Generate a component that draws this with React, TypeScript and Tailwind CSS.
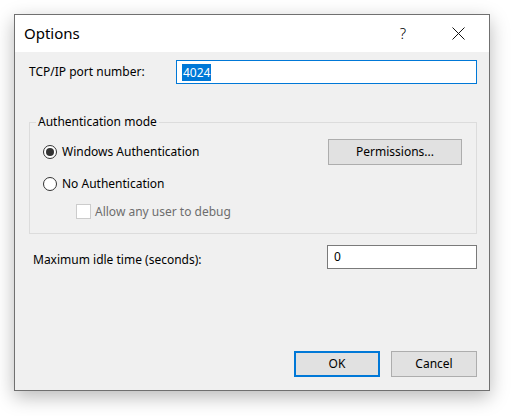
import React from 'react';

const font = { fontFamily: '"Noto Sans", "Liberation Sans", sans-serif' };

const Radio: React.FC<{ checked?: boolean }> = ({ checked }) => (
  <span className="w-[14px] h-[14px] rounded-full border border-[#333333] bg-white flex items-center justify-center shrink-0">
    {checked && <span className="w-[8px] h-[8px] rounded-full bg-[#333333]" />}
  </span>
);

const OptionsDialog: React.FC = () => {
  return (
    <div className="w-[512px] h-[416px] bg-white pt-[14px] pl-[14px] text-[12px] text-black" style={font}>
      <div className="w-[476px] h-[377px] border border-[#707070] bg-[#f0f0f0] flex flex-col shadow-[0_6px_18px_rgba(0,0,0,0.28)]">
        {/* title bar */}
        <div className="h-[37px] bg-white flex items-center shrink-0">
          <span className="pl-[9px] text-[15px] text-black">Options</span>
          <span className="ml-auto text-[15px] font-light text-black mr-[46px]">?</span>
          <svg className="w-[13px] h-[13px] mr-[24px]" viewBox="0 0 13 13" fill="none" stroke="#111" strokeWidth="1">
            <path d="M0.5 0.5 L12.5 12.5 M12.5 0.5 L0.5 12.5" />
          </svg>
        </div>

        <div className="flex-1 flex flex-col pl-[14px] pr-[12px] pb-[13px]">
          {/* tcp row */}
          <div className="flex items-center mt-[8px] h-[24px]">
            <span className="w-[147px]">TCP/IP port number:</span>
            <div className="flex-1 h-[24px] border border-[#0078d7] bg-white flex items-center pl-[5px]">
              <span className="bg-[#0078d7] text-white h-[17px] leading-[17px] px-[1px]">4024</span>
            </div>
          </div>

          {/* group box */}
          <fieldset className="mt-[30px] border border-[#dcdcdc]">
            <legend className="ml-[6px] px-[2px] leading-[16px]">Authentication mode</legend>
            <div className="pl-[13px] pr-[14px] pb-[14px]">
              <div className="flex items-center h-[26px] mt-[9px]">
                <Radio checked />
                <span className="ml-[5px]">Windows Authentication</span>
                <button className="ml-auto w-[134px] h-[26px] bg-[#e1e1e1] border border-[#adadad]">Permissions...</button>
              </div>
              <div className="flex items-center h-[16px] mt-[11px]">
                <Radio />
                <span className="ml-[5px]">No Authentication</span>
              </div>
              <div className="flex items-center h-[15px] mt-[12px] pl-[33px]">
                <span className="w-[15px] h-[15px] border border-[#cccccc] bg-white shrink-0" />
                <span className="ml-[4px] text-[#6d6d6d]">Allow any user to debug</span>
              </div>
            </div>
          </fieldset>

          {/* idle row */}
          <div className="flex items-center mt-[11px] h-[24px] pl-[4px]">
            <span className="mt-[5px]">Maximum idle time (seconds):</span>
            <div className="ml-auto w-[150px] h-[24px] border border-[#7a7a7a] bg-white flex items-center pl-[6px]">
              0
            </div>
          </div>

          {/* buttons */}
          <div className="mt-auto flex justify-end gap-[11px]">
            <button className="w-[86px] h-[26px] bg-[#e1e1e1] border-2 border-[#0078d7]">OK</button>
            <button className="w-[86px] h-[26px] bg-[#e1e1e1] border border-[#adadad]">Cancel</button>
          </div>
        </div>
      </div>
    </div>
  );
};

export default function App() {
  return <OptionsDialog />;
}
